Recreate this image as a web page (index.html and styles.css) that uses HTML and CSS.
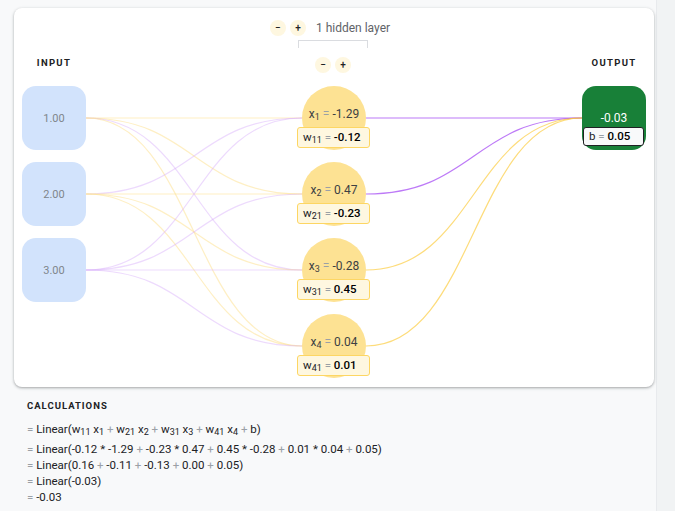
FILE: index.html
```html
<!DOCTYPE html>
<html>
<head>
<meta charset="utf-8">
<link rel="stylesheet" href="styles.css">
</head>
<body>
<div class="page">
  <div class="card">
    <div class="layers-ctrl">
      <span class="btn">−</span><span class="btn">+</span>
      <span class="layers-text">1 hidden layer</span>
    </div>
    <div class="bracket"></div>
    <div class="labels">
      <div class="col-label">INPUT</div>
      <div class="neuron-ctrl"><span class="btn">−</span><span class="btn">+</span></div>
      <div class="col-label">OUTPUT</div>
    </div>
    <div class="network">
      <svg class="links" width="624" height="292" viewBox="0 0 624 292">
        <g fill="none" stroke-width="1.2">
          <path class="ly" d="M64 32 C172 32 172 32 280 32"/>
          <path class="ly" d="M64 32 C172 32 172 108 280 108"/>
          <path class="lp" d="M64 32 C172 32 172 184 280 184"/>
          <path class="ly" d="M64 32 C172 32 172 260 280 260"/>
          <path class="lp" d="M64 108 C172 108 172 32 280 32"/>
          <path class="ly" d="M64 108 C172 108 172 108 280 108"/>
          <path class="ly" d="M64 108 C172 108 172 184 280 184"/>
          <path class="ly" d="M64 108 C172 108 172 260 280 260"/>
          <path class="lp" d="M64 184 C172 184 172 32 280 32"/>
          <path class="lp" d="M64 184 C172 184 172 108 280 108"/>
          <path class="lp" d="M64 184 C172 184 172 184 280 184"/>
          <path class="lp" d="M64 184 C172 184 172 260 280 260"/>
          <path class="op" d="M344 32 C452 32 452 32 560 32"/>
          <path class="op" d="M344 108 C452 108 452 32 560 32"/>
          <path class="oy" d="M344 184 C452 184 452 32 560 32"/>
          <path class="oy" d="M344 260 C452 260 452 32 560 32"/>
        </g>
      </svg>
      <div class="col">
        <div class="inode">1.00</div>
        <div class="inode">2.00</div>
        <div class="inode">3.00</div>
      </div>
      <div class="col hidden-col">
        <div class="hnode">
          <span class="hval">x<sub>1</sub> <span class="eq">=</span> -1.29</span>
          <div class="wbox">w<sub>11</sub> <span class="eq">=</span> <b>-0.12</b></div>
        </div>
        <div class="hnode">
          <span class="hval">x<sub>2</sub> <span class="eq">=</span> 0.47</span>
          <div class="wbox">w<sub>21</sub> <span class="eq">=</span> <b>-0.23</b></div>
        </div>
        <div class="hnode">
          <span class="hval">x<sub>3</sub> <span class="eq">=</span> -0.28</span>
          <div class="wbox">w<sub>31</sub> <span class="eq">=</span> <b>0.45</b></div>
        </div>
        <div class="hnode">
          <span class="hval">x<sub>4</sub> <span class="eq">=</span> 0.04</span>
          <div class="wbox">w<sub>41</sub> <span class="eq">=</span> <b>0.01</b></div>
        </div>
      </div>
      <div class="col">
        <div class="onode">
          <span class="oval">-0.03</span>
          <div class="bbox">b <span class="eq">=</span> <b>0.05</b></div>
        </div>
      </div>
    </div>
  </div>
  <div class="calc">
    <div class="calc-title">CALCULATIONS</div>
    <div class="eqs">
      <div class="eqline first"><span class="eq">=</span> Linear(w<sub>11</sub> x<sub>1</sub> <span class="eq">+</span> w<sub>21</sub> x<sub>2</sub> <span class="eq">+</span> w<sub>31</sub> x<sub>3</sub> <span class="eq">+</span> w<sub>41</sub> x<sub>4</sub> <span class="eq">+</span> b)</div>
      <div class="eqline"><span class="eq">=</span> Linear(-0.12 * -1.29 <span class="eq">+</span> -0.23 * 0.47 <span class="eq">+</span> 0.45 * -0.28 <span class="eq">+</span> 0.01 * 0.04 <span class="eq">+</span> 0.05)</div>
      <div class="eqline"><span class="eq">=</span> Linear(0.16 <span class="eq">+</span> -0.11 <span class="eq">+</span> -0.13 <span class="eq">+</span> 0.00 <span class="eq">+</span> 0.05)</div>
      <div class="eqline"><span class="eq">=</span> Linear(-0.03)</div>
      <div class="eqline"><span class="eq">=</span> -0.03</div>
    </div>
  </div>
</div>
</body>
</html>
```

FILE: styles.css
```css
* { box-sizing: border-box; }
html, body { margin: 0; padding: 0; }
body {
  background: #f1f3f4;
  font-family: Roboto, "Liberation Sans", Arial, sans-serif;
  color: #202124;
  width: 675px;
  height: 511px;
  overflow: hidden;
}
.page {
  width: 657px;
  height: 511px;
  background: #f8f9fa;
  border-right: 1px solid #e8eaed;
  padding: 8px 0 0 14px;
}
.card {
  width: 640px;
  height: 379px;
  background: #fff;
  border-radius: 8px;
  box-shadow: 0 1px 2px rgba(60,64,67,.3), 0 1px 3px 1px rgba(60,64,67,.12);
  padding: 12px 8px 0 8px;
  display: flex;
  flex-direction: column;
}
.layers-ctrl {
  display: flex;
  justify-content: center;
  align-items: center;
  height: 16px;
  padding-right: 8px;
}
.btn {
  width: 16px;
  height: 16px;
  border-radius: 50%;
  background: #fef7e0;
  display: flex;
  align-items: center;
  justify-content: center;
  font-size: 10px;
  font-weight: 500;
  line-height: 1;
  color: #202124;
  margin-right: 4px;
}
.layers-text {
  margin-left: 6px;
  font-size: 12px;
  color: #5f6368;
}
.bracket {
  align-self: center;
  width: 70px;
  height: 8px;
  margin-top: 4px;
  margin-right: 2px;
  border: 1px solid #dadce0;
  border-bottom: none;
}
.labels {
  margin-top: 9px;
  display: grid;
  grid-template-columns: 64px 1fr 64px;
  align-items: center;
  height: 16px;
}
.col-label {
  text-align: center;
  font-size: 9.5px;
  font-weight: 700;
  letter-spacing: 1.3px;
  color: #202124;
  padding-bottom: 5px;
}
.neuron-ctrl {
  display: flex;
  justify-content: center;
  padding-left: 2px;
}
.network {
  position: relative;
  margin-top: 13px;
  height: 292px;
  display: grid;
  grid-template-columns: 64px 1fr 64px;
}
.links {
  position: absolute;
  left: 0;
  top: 0;
}
.ly { stroke: #fde293; stroke-opacity: .55; }
.lp { stroke: #d7aefb; stroke-opacity: .45; }
.op { stroke: #a142f4; stroke-opacity: .7; }
.oy { stroke: #fcc934; stroke-opacity: .65; }
.col {
  position: relative;
  z-index: 1;
  display: flex;
  flex-direction: column;
  gap: 12px;
}
.hidden-col {
  justify-self: center;
  width: 64px;
}
.inode {
  width: 64px;
  height: 64px;
  border-radius: 14px;
  background: #d2e3fc;
  color: #80868b;
  font-size: 11px;
  display: flex;
  align-items: center;
  justify-content: center;
}
.hnode {
  position: relative;
  width: 64px;
  height: 64px;
  border-radius: 50%;
  background: #fde293;
  display: flex;
  justify-content: center;
  padding-top: 21px;
}
.hval {
  font-size: 12px;
  line-height: 14px;
  color: #3c4043;
  white-space: nowrap;
}
sub {
  font-size: 9px;
  vertical-align: -2px;
  line-height: 0;
}
.eq { color: #9aa0a6; }
.wbox {
  position: absolute;
  left: -5px;
  top: 41px;
  width: 73px;
  height: 21px;
  background: #fef7e0;
  border: 1px solid #fdd663;
  border-radius: 3px;
  padding-left: 5px;
  font-size: 11.5px;
  line-height: 18px;
  color: #202124;
  white-space: nowrap;
}
.wbox b, .bbox b { font-weight: 500; color: #000; }
.onode {
  position: relative;
  width: 64px;
  height: 64px;
  border-radius: 14px;
  background: #188038;
  display: flex;
  justify-content: center;
  padding-top: 25px;
}
.oval {
  color: #fff;
  font-size: 12px;
  line-height: 14px;
}
.bbox {
  position: absolute;
  left: 1px;
  top: 41px;
  width: 61px;
  height: 19px;
  background: #f8f9fa;
  border: 1px solid #202124;
  border-radius: 3px;
  padding-left: 5px;
  font-size: 11.5px;
  line-height: 17px;
  color: #202124;
  white-space: nowrap;
}
.calc {
  padding: 13px 0 0 13px;
}
.calc-title {
  font-size: 9.5px;
  font-weight: 700;
  letter-spacing: 1px;
  line-height: 12px;
  color: #202124;
}
.eqs {
  margin-top: 9px;
}
.eqline {
  font-size: 11.5px;
  line-height: 16px;
  color: #202124;
  white-space: nowrap;
}
.eqline.first {
  margin-bottom: 4px;
}
```
